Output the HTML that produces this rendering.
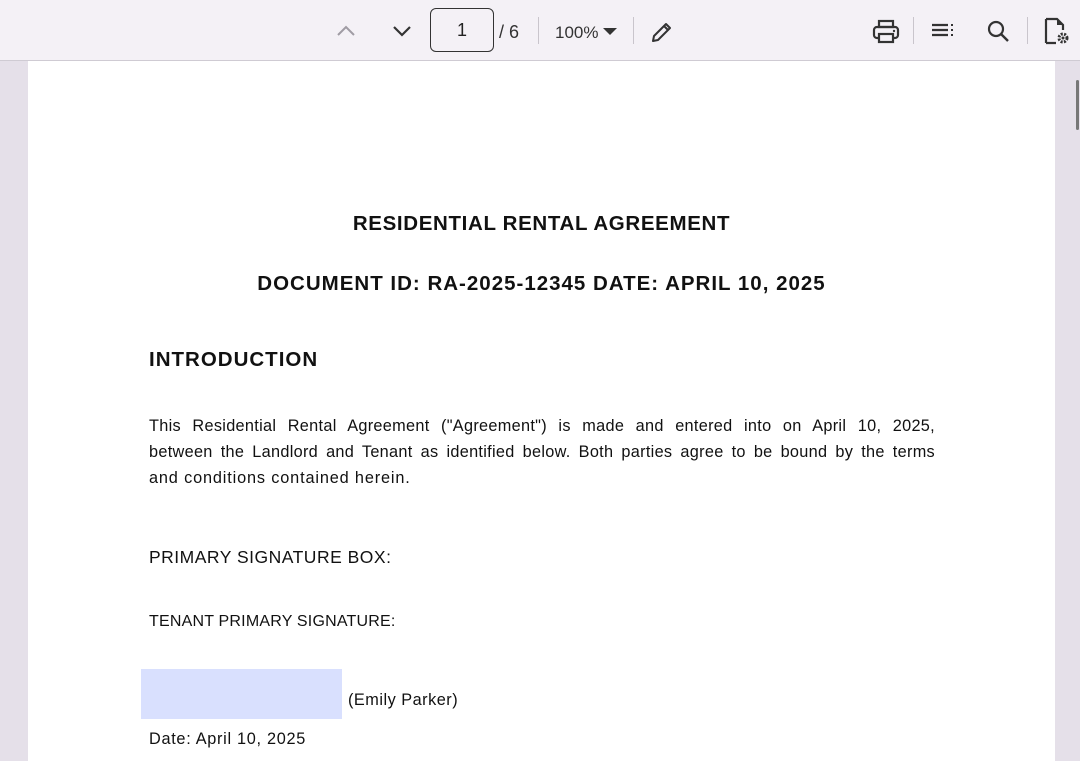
<!DOCTYPE html>
<html><head><style>
*{margin:0;padding:0;box-sizing:border-box}
body{width:1080px;height:746px;overflow:hidden;background:#e5e0e9;font-family:"Liberation Sans",sans-serif;position:relative}
#tb{position:absolute;left:0;top:0;width:1080px;height:61px;background:#f4f1f6;border-bottom:1px solid #cfcbd3}
.sep{position:absolute;top:17px;width:1px;height:27px;background:#c9c5cc}
#page{position:absolute;left:28px;top:61px;width:1027px;height:700px;background:#fff}
.t{position:absolute;color:#111;white-space:nowrap}
.l{position:absolute;left:149px;width:786px;font-size:16.3px;color:#111;text-align:justify;text-align-last:justify;letter-spacing:0.3px;white-space:nowrap}
</style></head><body>
<div id="tb">
<svg style="position:absolute;left:336px;top:24px" width="20" height="14"><path d="M2 11 L10 3 L18 11" fill="none" stroke="#a09ca4" stroke-width="2"/></svg>
<svg style="position:absolute;left:392px;top:24px" width="20" height="14"><path d="M2 3 L10 11 L18 3" fill="none" stroke="#333" stroke-width="2.2"/></svg>
<div style="position:absolute;left:430px;top:8px;width:64px;height:44px;border:1.5px solid #333;border-radius:6px;font-size:18px;text-align:center;line-height:42px;color:#222">1</div>
<div class="t" style="left:499px;top:22px;font-size:18px;color:#333">/ 6</div>
<div class="sep" style="left:538px"></div>
<div class="t" style="left:555px;top:23px;font-size:17px;color:#333">100%</div>
<svg style="position:absolute;left:603px;top:28px" width="14" height="8"><path d="M0 0 H14 L7 7Z" fill="#333"/></svg>
<div class="sep" style="left:633px"></div>
<svg style="position:absolute;left:650px;top:20px" width="24" height="24"><path d="M3 21 L4 16 L16 4 L20 8 L8 20 Z M14 6 L18 10" fill="none" stroke="#333" stroke-width="2" stroke-linejoin="round"/></svg>
<svg style="position:absolute;left:872px;top:19px" width="28" height="26"><rect x="7" y="2" width="14" height="6" fill="none" stroke="#333" stroke-width="2.2"/><rect x="2" y="8" width="24" height="11" rx="3" fill="none" stroke="#333" stroke-width="2.2"/><rect x="7" y="15" width="14" height="8" fill="#f4f1f6" stroke="#333" stroke-width="2.2"/><circle cx="22" cy="12" r="1.2" fill="#333"/></svg>
<div class="sep" style="left:913px"></div>
<svg style="position:absolute;left:932px;top:23px" width="24" height="16"><path d="M0 2H16M0 7H16M0 12H16" stroke="#333" stroke-width="2.2"/><path d="M20 1V3M20 6V8M20 11V13" stroke="#333" stroke-width="2"/></svg>
<svg style="position:absolute;left:986px;top:19px" width="26" height="26"><circle cx="10" cy="10" r="7" fill="none" stroke="#333" stroke-width="2.2"/><path d="M15 15 L22 22" stroke="#333" stroke-width="2.4"/></svg>
<div class="sep" style="left:1027px"></div>
<svg style="position:absolute;left:1043px;top:17px" width="28" height="28"><path d="M3 2 H14 L20 8 V13 M13 26 H3 Z M3 2 V26" fill="none" stroke="#333" stroke-width="2.2"/><path d="M14 2 L20 8 H14Z" fill="#333"/><circle cx="20" cy="21" r="4" fill="none" stroke="#333" stroke-width="3" stroke-dasharray="2 1.3"/><circle cx="20" cy="21" r="1.5" fill="#333"/></svg>
</div>
<div style="position:absolute;left:1076px;top:80px;width:3px;height:50px;background:#777;border-radius:2px"></div>
<div id="page"></div>
<div class="t" style="left:0;width:1083px;text-align:center;top:212px;font-size:20.5px;font-weight:bold;letter-spacing:0.65px">RESIDENTIAL RENTAL AGREEMENT</div>
<div class="t" style="left:0;width:1083px;text-align:center;top:272px;font-size:20.5px;font-weight:bold;letter-spacing:1px">DOCUMENT ID: RA-2025-12345 DATE: APRIL 10, 2025</div>
<div class="t" style="left:149px;top:348px;font-size:20.5px;font-weight:bold;letter-spacing:1px">INTRODUCTION</div>
<div class="l" style="top:417px">This Residential Rental Agreement ("Agreement") is made and entered into on April 10, 2025,</div>
<div class="l" style="top:443px">between the Landlord and Tenant as identified below. Both parties agree to be bound by the terms</div>
<div class="t" style="left:149px;top:469px;font-size:16.3px;letter-spacing:0.85px">and conditions contained herein.</div>
<div class="t" style="left:149px;top:547px;font-size:17.5px;letter-spacing:0.5px">PRIMARY SIGNATURE BOX:</div>
<div class="t" style="left:149px;top:613px;font-size:16px;letter-spacing:0.2px">TENANT PRIMARY SIGNATURE:</div>
<div style="position:absolute;left:141px;top:669px;width:201px;height:50px;background:#d9e0fe"></div>
<div class="t" style="left:348px;top:691px;font-size:16.3px;letter-spacing:0.5px">(Emily Parker)</div>
<div class="t" style="left:149px;top:730px;font-size:16.3px;letter-spacing:0.7px">Date: April 10, 2025</div>
</body></html>
